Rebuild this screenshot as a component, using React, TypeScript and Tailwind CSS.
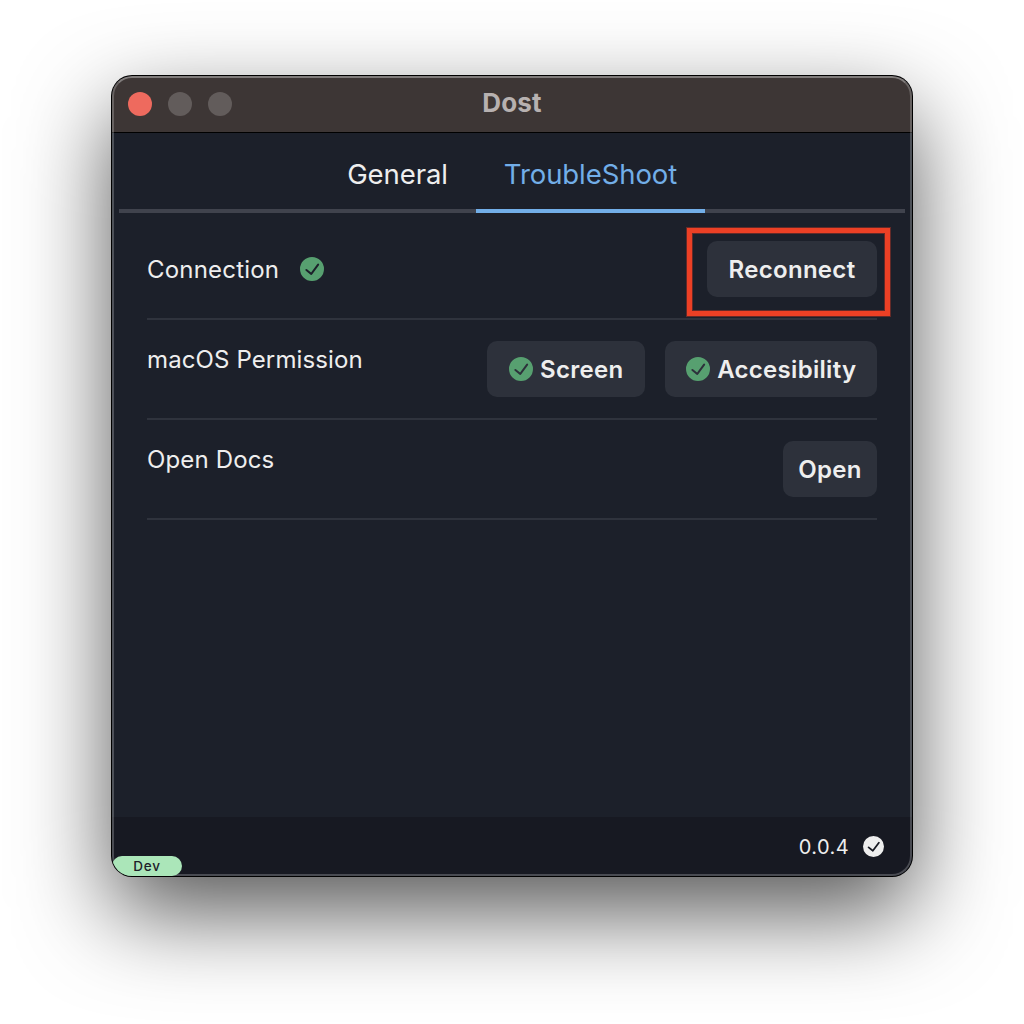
import type { ReactNode } from 'react';

function CheckCircle({ className }: { className: string }) {
  return (
    <svg viewBox="0 0 24 24" className={`shrink-0 ${className}`} aria-hidden="true">
      <path
        fill="currentColor"
        d="M12,0A12,12,0,1,0,24,12,12.014,12.014,0,0,0,12,0Zm6.927,8.2-6.845,9.289a1.011,1.011,0,0,1-1.43.188L5.764,13.769a1,1,0,1,1,1.25-1.562l4.076,3.261,6.227-8.451A1,1,0,1,1,18.927,8.2Z"
      />
    </svg>
  );
}

function ActionButton({ className, children }: { className: string; children: ReactNode }) {
  return (
    <button
      className={`flex h-14 items-center justify-center gap-[7.5px] rounded-[10px] bg-[#2d313b] text-[24px] font-semibold tracking-[0.3px] whitespace-nowrap text-[#eeeeee] ${className}`}
    >
      {children}
    </button>
  );
}

function Row({ label, children }: { label: ReactNode; children: ReactNode }) {
  return (
    <div className="flex h-[100px] items-start justify-between border-b-2 border-[#2f333d] pt-[21px]">
      {label}
      <div className="flex gap-5">{children}</div>
    </div>
  );
}

export default function App() {
  return (
    <div className="h-[1024px] w-[1024px] overflow-hidden bg-white px-28 pt-[76px] font-['Inter',sans-serif]">
      <div className="relative flex h-[800px] w-[800px] flex-col overflow-hidden rounded-[20px] bg-[#1c202a] text-[#eeeeee] shadow-[0_0_0_1px_#000,0_36px_92px_rgba(0,0,0,0.67)]">
        <header className="relative flex h-[57px] shrink-0 items-center justify-center border-b border-black bg-[#3d3635]">
          <div className="absolute top-4 left-4 flex gap-4">
            <span className="size-6 rounded-full bg-[#ee6a5e]" />
            <span className="size-6 rounded-full bg-[#625c5b]" />
            <span className="size-6 rounded-full bg-[#625c5b]" />
          </div>
          <h1 className="pb-[3px] text-[26px] font-bold tracking-[0.2px] text-[#b7b1b0]">Dost</h1>
        </header>

        <nav className="mx-[7px] flex h-20 shrink-0 justify-center border-b-4 border-[#40434d] text-[27.5px]">
          <div className="flex h-20 w-[157px] items-center justify-center pt-1">
            <span className="tracking-[-0.1px]">General</span>
          </div>
          <div className="flex h-20 w-[229px] items-center justify-center border-b-4 border-[#72aee8] pt-2 text-[#72aee8]">
            <span className="tracking-[-0.08px]">TroubleShoot</span>
          </div>
        </nav>

        <main className="flex-1 px-[35px] pt-[7px] text-[24px]">
          <Row
            label={
              <div className="flex h-14 items-center gap-[21px]">
                <span className="pt-0.5 tracking-[0.2px]">Connection</span>
                <CheckCircle className="size-6 text-[#57a070]" />
              </div>
            }
          >
            <ActionButton className="w-[170px]">
              <span className="pt-0.5">Reconnect</span>
            </ActionButton>
          </Row>
          <Row label={<span className="pt-px leading-9 tracking-[0.12px]">macOS Permission</span>}>
            <ActionButton className="w-[158px]">
              <CheckCircle className="size-6 text-[#57a070]" />
              <span className="pt-0.5">Screen</span>
            </ActionButton>
            <ActionButton className="w-[212px]">
              <CheckCircle className="size-6 text-[#57a070]" />
              <span className="pt-0.5">Accesibility</span>
            </ActionButton>
          </Row>
          <Row label={<span className="pt-px leading-9 tracking-[0.15px]">Open Docs</span>}>
            <ActionButton className="w-[94px]">
              <span className="pt-0.5">Open</span>
            </ActionButton>
          </Row>
        </main>

        <footer className="flex h-[59px] shrink-0 items-center justify-end gap-[14px] bg-[#171922] pr-7 text-[20px]">
          <span className="tracking-[0.4px]">0.0.4</span>
          <CheckCircle className="size-[21px] text-[#eeeeee]" />
        </footer>

        <div className="pointer-events-none absolute inset-0 rounded-[20px] border-2 border-white/22 border-t-white/35" />
        <span className="absolute bottom-0 left-0 flex h-5 w-[70px] items-center justify-center rounded-[10px] bg-[#abe6b9] text-[13.5px] font-medium tracking-[0.8px] text-[#1d202a]">
          Dev
        </span>
        <div className="absolute top-[152px] left-[575px] h-[88px] w-[203px] border-5 border-[#ec4025] shadow-[0_0_0_1px_rgba(236,64,37,0.35),inset_0_0_0_1px_rgba(236,64,37,0.35)]" />
      </div>
    </div>
  );
}
